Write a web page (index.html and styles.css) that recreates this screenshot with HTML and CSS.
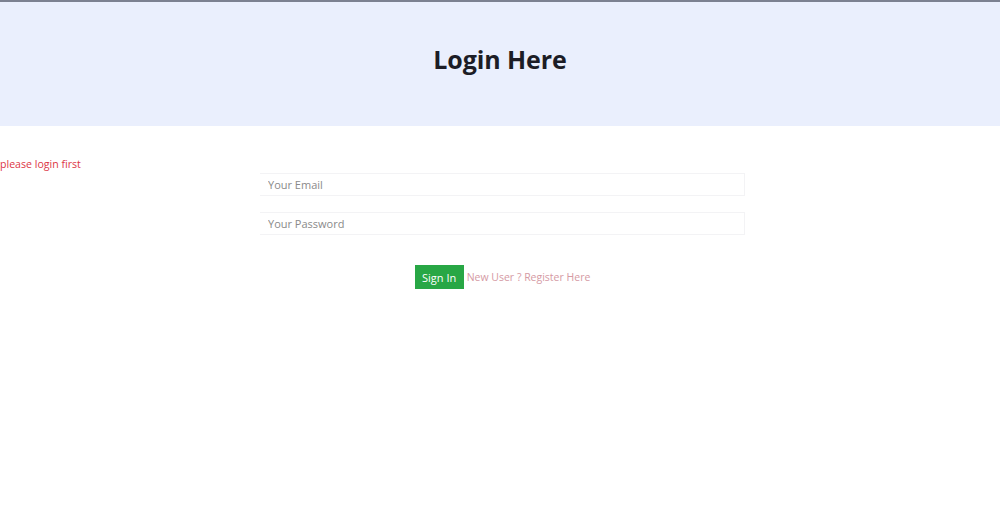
FILE: index.html
```html
<!DOCTYPE html>
<html lang="en">
<head>
<meta charset="utf-8">
<title>Login</title>
<link rel="stylesheet" href="styles.css">
</head>
<body>
<header class="hero">
  <h1 class="hero-title">Login Here</h1>
</header>
<main class="content">
  <p class="alert">please login first</p>
  <form class="login-form">
    <input class="field" type="email" placeholder="Your Email">
    <input class="field" type="password" placeholder="Your Password">
    <div class="actions">
      <button class="btn-signin" type="button">Sign In</button>
      <a class="register-link" href="#">New User ? Register Here</a>
    </div>
  </form>
</main>
</body>
</html>
```
FILE: styles.css
```css
html, body {
  margin: 0;
  padding: 0;
  background: #ffffff;
  font-family: "Open Sans", "Noto Sans", sans-serif;
}
.hero {
  border-top: 2px solid #7c8191;
  background: #eaeffd;
  height: 124px;
  display: flex;
  align-items: center;
  justify-content: center;
}
.hero-title {
  margin: 0;
  font-size: 25px;
  font-weight: 700;
  color: #1c1d26;
  letter-spacing: -0.1px;
  padding-bottom: 10px;
}
.content {
  padding-top: 31px;
}
.alert {
  margin: 0;
  font-size: 10.6px;
  line-height: 14px;
  color: #dc3545;
}
.login-form {
  width: 485px;
  margin: 2px auto 0 260px;
  display: flex;
  flex-direction: column;
}
.field {
  box-sizing: border-box;
  height: 23px;
  width: 485px;
  margin: 0 0 16px 0;
  padding: 0 8px;
  border: 1px solid #f3f3f5;
  border-left: 0;
  font-family: inherit;
  font-size: 11px;
  color: #555;
  outline: none;
}
.field::placeholder {
  color: #8a8a8a;
}
.actions {
  margin-top: 14px;
  display: flex;
  justify-content: center;
  align-items: center;
  gap: 3px;
}
.btn-signin {
  width: 49px;
  height: 24px;
  border: 0;
  padding: 0;
  background: #28a745;
  color: #ffffff;
  font-family: inherit;
  font-size: 11px;
}
.register-link {
  font-size: 10.5px;
  color: #d59aa4;
  text-decoration: none;
}
```
